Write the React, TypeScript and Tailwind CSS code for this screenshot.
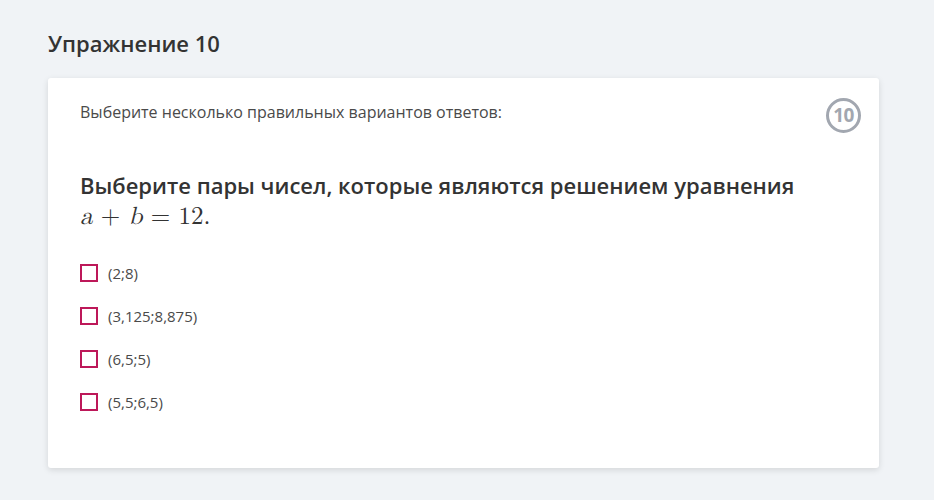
import React from 'react';

const options = ['(2;8)', '(3,125;8,875)', '(6,5;5)', '(5,5;6,5)'];

export default function App() {
  return (
    <div className="min-h-[500px] w-full bg-[#f0f3f6] pl-12 pr-[55px] pt-[26px] pb-8 font-['Open_Sans',sans-serif]">
      <h1 className="text-[22px] font-semibold text-[#333] leading-[34px]">Упражнение 10</h1>
      <div className="relative mt-[18px] h-[390px] rounded-[3px] bg-white px-8 pt-[22px] shadow-[0_2px_6px_rgba(0,0,0,0.12)]">
        {/* номер задания */}
        <div className="absolute right-[18px] top-[20px] flex h-[35px] w-[35px] items-center justify-center rounded-full border-[3px] border-[#a2a7b0] text-[19px] font-bold tracking-[-0.5px] text-[#a2a7b0]">
          10
        </div>

        <p className="text-[16px] leading-6 text-[#4a4a4a]">Выберите несколько правильных вариантов ответов:</p>

        <h2 className="mt-[46px] text-[22px] font-semibold leading-[30px] text-[#333]">
          Выберите пары чисел, которые являются решением уравнения
          <br />
          <span className="font-['Latin_Modern_Math','DejaVu_Serif','Liberation_Serif',serif] text-[25px] font-normal">
            <i>a</i>&nbsp;+&nbsp;<i>b</i>&nbsp;=&nbsp;12.
          </span>
        </h2>

        <div className="mt-[32px] flex flex-col gap-[25px]">
          {options.map((o) => (
            <label key={o} className="flex h-[18px] items-center gap-[10px] text-[15px] text-[#4a4a4a]">
              <span className="h-[18px] w-[18px] shrink-0 border-2 border-[#bd1859]" />
              {o}
            </label>
          ))}
        </div>
      </div>
    </div>
  );
}
